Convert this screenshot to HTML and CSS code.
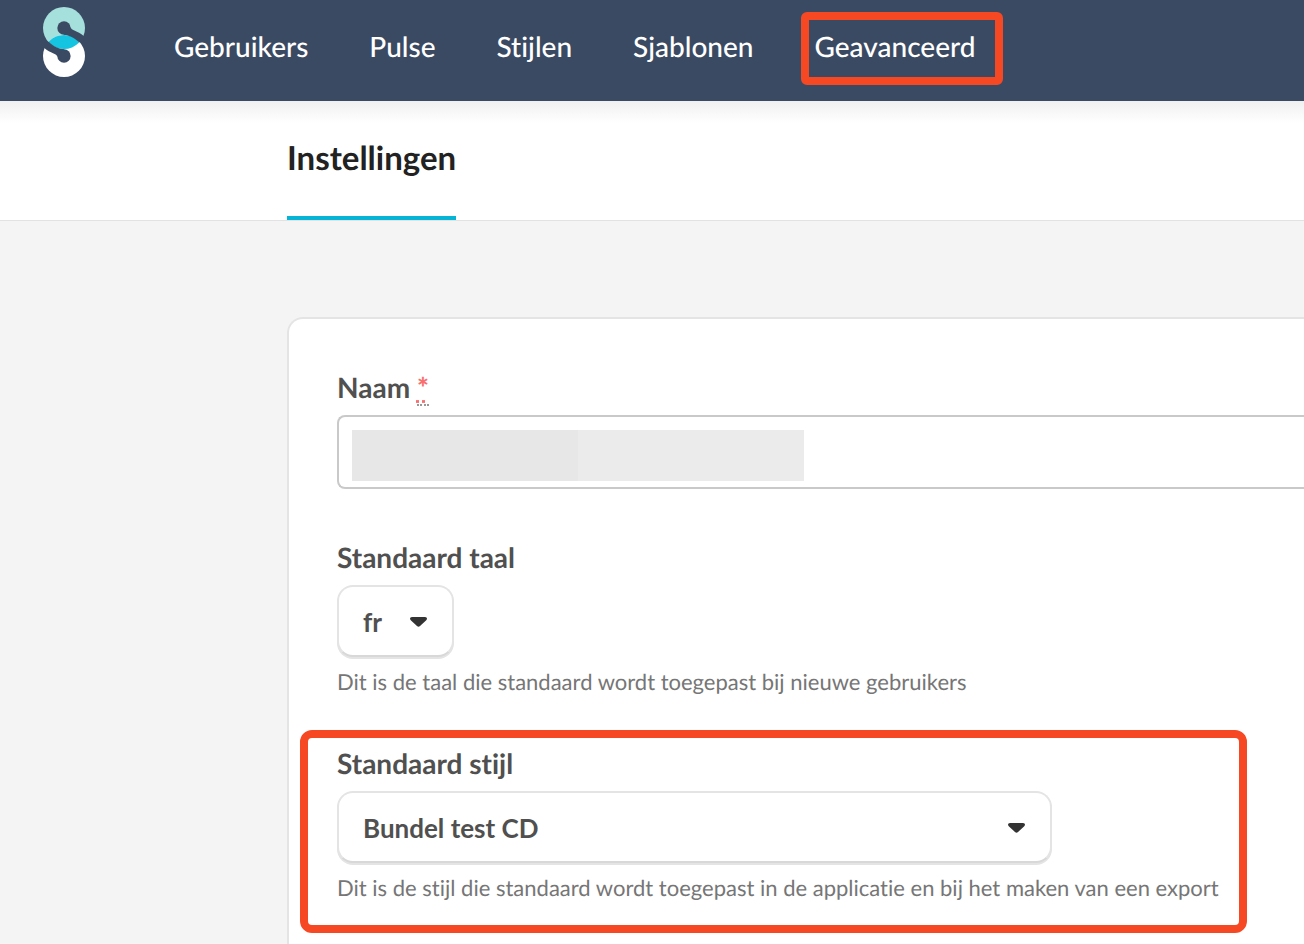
FILE: index.html
```html
<!DOCTYPE html>
<html lang="nl">
<head>
  <meta charset="UTF-8">
  <meta name="viewport" content="width=device-width, initial-scale=1">
  <title>Instellingen</title>
  <link rel="stylesheet" href="styles.css">
</head>
<body>

  <header class="topbar">
    <a class="logo" href="#" aria-label="Home">
      <svg width="42" height="70" viewBox="69 21 126 210">
        <defs>
          <clipPath id="top"><circle cx="132" cy="84" r="63"/></clipPath>
        </defs>
        <circle cx="132" cy="84" r="63" fill="#a6e0dd"/>
        <circle cx="132" cy="168" r="63" fill="#fff"/>
        <circle cx="132" cy="168" r="63" fill="#14c4e0" clip-path="url(#top)"/>
        <g fill="#3b4a63">
          <circle cx="132" cy="84" r="20"/>
          <path d="M152 82 C153 92 172 91 192 109 L200 120 L178 127 C162 112 148 106 131 104 Z"/>
          <circle cx="132" cy="168" r="20"/>
          <path d="M112 170 C111 160 92 161 72 143 L64 132 L86 125 C102 140 116 146 133 148 Z"/>
        </g>
      </svg>
    </a>
    <nav class="menu">
      <a href="#">Gebruikers</a>
      <a href="#">Pulse</a>
      <a href="#">Stijlen</a>
      <a href="#">Sjablonen</a>
      <a href="#" class="marked">Geavanceerd</a>
    </nav>
  </header>

  <div class="tabs">
    <a href="#" class="tab">Instellingen</a>
  </div>

  <main>
    <form class="card">
      <div class="field">
        <label for="name">Naam <abbr title="verplicht">*</abbr></label>
        <input type="text" id="name">
      </div>

      <div class="field">
        <label for="language">Standaard taal</label>
        <div class="dropdown dropdown-small">
          <select id="language">
            <option>fr</option>
          </select>
          <svg class="caret" width="17" height="10" viewBox="0 0 17 10"><path d="M2 0h13q2 0 2 1.500q0 1-1 2l-6 5.500q-1.500 1.500-3 0l-6-5.500q-1-1-1-2q0-1.500 2-1.500z"/></svg>
        </div>
        <p class="hint">Dit is de taal die standaard wordt toegepast bij nieuwe gebruikers</p>
      </div>

      <div class="field marked">
        <label for="style">Standaard stijl</label>
        <div class="dropdown">
          <select id="style">
            <option>Bundel test CD</option>
          </select>
          <svg class="caret" width="17" height="10" viewBox="0 0 17 10"><path d="M2 0h13q2 0 2 1.500q0 1-1 2l-6 5.500q-1.500 1.500-3 0l-6-5.500q-1-1-1-2q0-1.500 2-1.500z"/></svg>
        </div>
        <p class="hint">Dit is de stijl die standaard wordt toegepast in de applicatie en bij het maken van een export</p>
      </div>
    </form>
  </main>

</body>
</html>
```
FILE: styles.css
```css
*, *::after {
  box-sizing: border-box;
}

body {
  margin: 0;
  min-height: 100vh;
  display: flex;
  flex-direction: column;
  font-family: Lato, sans-serif;
  font-variant-ligatures: none;
  text-rendering: geometricPrecision;
  background: #f4f4f4;
  color: #505050;
}

/* top bar */
.topbar {
  display: flex;
  align-items: flex-start;
  height: 101px;
  padding: 7px 43px;
  background: #3b4a63;
}

.logo svg {
  display: block;
}

.menu {
  display: flex;
  gap: 61px;
  margin: 22px 0 0 89px;
}

.menu a {
  position: relative;
  color: #fff;
  font-size: 28px;
  font-weight: 500;
  line-height: 34px;
  text-decoration: none;
}

/* tabs */
.tabs {
  display: flex;
  height: 120px;
  padding-left: 287px;
  background: linear-gradient(#f0f0f1, #fff 22px);
  border-bottom: 1px solid #e2e2e2;
}

.tab {
  padding-top: 38px;
  border-bottom: 4px solid #06b5d6;
  color: #222;
  font-size: 33px;
  font-weight: bold;
  line-height: 38px;
  text-decoration: none;
}

/* settings form */
main {
  flex: 1;
  display: flex;
  padding: 96px 0 0 287px;
}

.card {
  flex: 1;
  padding: 51px 0 40px 48px;
  background: #fff;
  border: 2px solid #e4e4e4;
  border-width: 2px 0 0 2px;
  border-radius: 16px 0 0 0;
}

.field {
  position: relative;
  margin-bottom: 51px;
}

.field:last-child {
  margin-bottom: 0;
}

label {
  display: block;
  margin-bottom: 11px;
  font-size: 28px;
  font-weight: bold;
  line-height: 34px;
}

abbr {
  border-bottom: 2px dotted #999;
  color: #f96f6f;
  font-weight: 900;
}

input {
  display: block;
  width: 100%;
  height: 74px;
  padding: 0 14px;
  font: 26px Lato, sans-serif;
  border: 2px solid #c9c9c9;
  border-right: 0;
  border-radius: 8px 0 0 8px;
  /* hidden value */
  background: linear-gradient(to right, #e7e7e7 50%, #ebebeb 50%) 13px 13px / 452px 51px no-repeat #fff;
}

.dropdown {
  position: relative;
  width: 715px;
}

.dropdown-small {
  width: 117px;
}

select {
  display: block;
  width: 100%;
  height: 72px;
  padding: 2px 24px 0;
  appearance: none;
  background: #fff;
  border: 2px solid #e4e4e4;
  border-bottom-color: #d8d8d8;
  border-radius: 16px;
  box-shadow: 0 2px 0 #e4e4e4;
  color: #505050;
  font: bold 26px Lato, sans-serif;
}

.caret {
  position: absolute;
  top: 32px;
  right: 27px;
  fill: #333;
  pointer-events: none;
}

.hint {
  margin: 12px 0 0;
  color: #767676;
  font-size: 22px;
  line-height: 26px;
}

/* red frames */
.marked::after {
  content: "";
  position: absolute;
  border: 8px solid #f74824;
  pointer-events: none;
}

.menu .marked::after {
  inset: -17px -28px -22px -14px;
  border-radius: 6px;
}

.field.marked::after {
  top: -16px;
  bottom: -32px;
  left: -37px;
  width: 947px;
  border-radius: 12px;
}
```
